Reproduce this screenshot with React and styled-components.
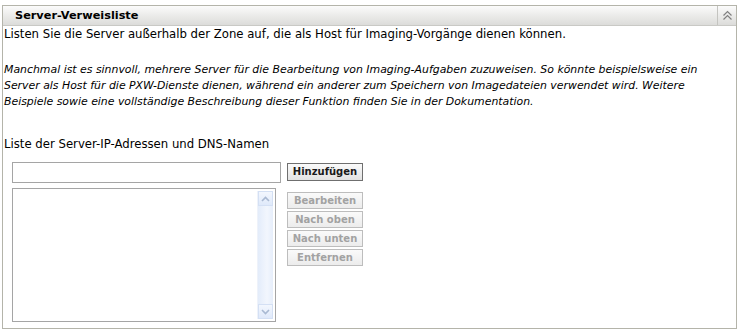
import styled, { createGlobalStyle } from "styled-components";

const GlobalStyle = createGlobalStyle`
  html, body {
    margin: 0;
    padding: 0;
    background: #ffffff;
  }
  body {
    font-family: "DejaVu Sans", Tahoma, sans-serif;
    font-size: 11.7px;
    color: #000;
  }
`;

const Panel = styled.div`
  margin: 5px 0 0 2px;
  width: 735px;
  height: 324px;
  border: 1px solid #b4b4aa;
  box-sizing: border-box;
  display: flex;
  flex-direction: column;
`;

const Header = styled.div`
  height: 20px;
  display: flex;
  align-items: stretch;
  background: linear-gradient(#fbfbfb, #e8e8e6 60%, #dcdcda);
  border-bottom: 1px solid #c9c9c5;
  box-sizing: border-box;
`;

const Title = styled.div`
  flex: 1;
  padding-left: 12px;
  display: flex;
  align-items: center;
  font-weight: bold;
  font-size: 11.3px;
`;

const Collapse = styled.div`
  width: 18px;
  border-left: 1px solid #c4c4c0;
  display: flex;
  align-items: center;
  justify-content: center;
`;

const Body = styled.div`
  padding: 0 0 0 1px;
  display: flex;
  flex-direction: column;
`;

const Text = styled.p`
  margin: ${(p) => p.$mt || 0}px 0 0;
  line-height: 16px;
  font-style: ${(p) => (p.$italic ? "italic" : "normal")};
  font-size: ${(p) => (p.$italic ? "10.9px" : "11.7px")};
  white-space: nowrap;
`;

const Editor = styled.div`
  margin: 10px 0 0 8px;
  display: flex;
  gap: 6px;
`;

const LeftCol = styled.div`
  display: flex;
  flex-direction: column;
  gap: 5px;
`;

const RightCol = styled.div`
  display: flex;
  flex-direction: column;
  padding-top: 1px;
`;

const Input = styled.input`
  width: 269px;
  height: 21px;
  box-sizing: border-box;
  border: 1px solid #a5a5a5;
  margin: 0;
  padding: 0 3px;
  font: inherit;
`;

const ListBox = styled.div`
  width: 264px;
  height: 134px;
  box-sizing: border-box;
  border: 1px solid #a5a5a5;
  display: flex;
  justify-content: flex-end;
  padding: 2px 2px 2px 0;
`;

const ScrollBar = styled.div`
  width: 15px;
  display: flex;
  flex-direction: column;
  justify-content: space-between;
  background: linear-gradient(90deg, #e3ecfa, #f2f6fd 60%, #e6eefb);
  border-left: 1px solid #eef2fa;
`;

const ScrollBtn = styled.div`
  height: 15px;
  box-sizing: border-box;
  border: 1px solid #d4e0f4;
  background: linear-gradient(#f3f7fe, #dfe9fa);
  display: flex;
  align-items: center;
  justify-content: center;
`;

const Button = styled.button`
  width: 76px;
  height: ${(p) => (p.$disabled ? 17 : 18)}px;
  margin: ${(p) => p.$mt || 0}px 0 0;
  padding: 0;
  box-sizing: border-box;
  font-family: "DejaVu Sans", Tahoma, sans-serif;
  font-size: 10px;
  font-weight: bold;
  color: ${(p) => (p.$disabled ? "#a2a2a2" : "#1a1a1a")};
  border: 1px solid ${(p) => (p.$disabled ? "#bdbdbd" : "#6f6f6f")};
  background: ${(p) =>
    p.$disabled
      ? "linear-gradient(#fafafa, #ececec)"
      : "linear-gradient(#fafafa, #e2e2e2)"};
  line-height: 14px;
`;

function Chevron({ up }) {
  return (
    <svg width="9" height="6" viewBox="0 0 9 6">
      <path
        d={up ? "M1 5 L4.5 1.5 L8 5" : "M1 1 L4.5 4.5 L8 1"}
        stroke="#a9b9d2"
        strokeWidth="1.6"
        fill="none"
      />
    </svg>
  );
}

function DoubleUp() {
  return (
    <svg width="11" height="11" viewBox="0 0 11 11">
      <path d="M1.5 5.5 L5.5 1.5 L9.5 5.5" stroke="#808080" strokeWidth="1.2" fill="none" />
      <path d="M1.5 9.5 L5.5 5.5 L9.5 9.5" stroke="#808080" strokeWidth="1.2" fill="none" />
    </svg>
  );
}

export default function App() {
  return (
    <>
      <GlobalStyle />
      <Panel>
        <Header>
          <Title>Server-Verweisliste</Title>
          <Collapse>
            <DoubleUp />
          </Collapse>
        </Header>
        <Body>
          <Text>
            Listen Sie die Server außerhalb der Zone auf, die als Host für Imaging-Vorgänge dienen können.
          </Text>
          <Text $italic $mt={20}>
            Manchmal ist es sinnvoll, mehrere Server für die Bearbeitung von Imaging-Aufgaben zuzuweisen. So könnte beispielsweise ein
            <br />
            Server als Host für die PXW-Dienste dienen, während ein anderer zum Speichern von Imagedateien verwendet wird. Weitere
            <br />
            Beispiele sowie eine vollständige Beschreibung dieser Funktion finden Sie in der Dokumentation.
          </Text>
          <Text $mt={26}>Liste der Server-IP-Adressen und DNS-Namen</Text>
          <Editor>
            <LeftCol>
              <Input type="text" />
              <ListBox>
                <ScrollBar>
                  <ScrollBtn>
                    <Chevron up />
                  </ScrollBtn>
                  <ScrollBtn>
                    <Chevron />
                  </ScrollBtn>
                </ScrollBar>
              </ListBox>
            </LeftCol>
            <RightCol>
              <Button>Hinzufügen</Button>
              <Button $disabled $mt={11}>Bearbeiten</Button>
              <Button $disabled $mt={2}>Nach oben</Button>
              <Button $disabled $mt={2}>Nach unten</Button>
              <Button $disabled $mt={2}>Entfernen</Button>
            </RightCol>
          </Editor>
        </Body>
      </Panel>
    </>
  );
}
